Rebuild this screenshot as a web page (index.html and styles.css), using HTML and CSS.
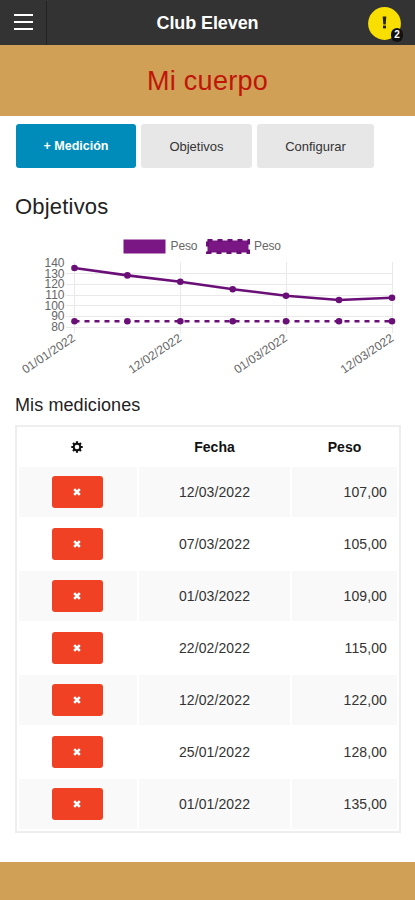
FILE: index.html
```html
<!DOCTYPE html>
<html lang="es">
<head>
    <meta charset="UTF-8">
    <meta name="viewport" content="width=device-width, initial-scale=1.0">
    <title>Club Eleven</title>
    <link rel="stylesheet" href="styles.css">
</head>
<body>
    <header class="topbar">
        <div class="menu">
            <div class="bars"><span></span><span></span><span></span></div>
        </div>
        <h1>Club Eleven</h1>
        <div class="alert">
            <svg width="34" height="34" viewBox="0 0 34 34">
                <circle cx="16.5" cy="16.5" r="16.4" fill="#f9df00"/>
                <path d="M14.7 9.4h3.6l-.6 8h-2.4z" fill="#222"/>
                <rect x="15" y="18.6" width="3" height="2.8" fill="#222"/>
            </svg>
            <span class="badge">2</span>
        </div>
    </header>

    <div class="page-title">Mi cuerpo</div>

    <main>
        <div class="buttons">
            <button class="btn primary">+ Medición</button>
            <button class="btn goals">Objetivos</button>
            <button class="btn config">Configurar</button>
        </div>

        <h2>Objetivos</h2>

        <svg class="chart" width="415" height="150" viewBox="0 230 415 150">
            <!-- Legend -->
            <rect x="123.5" y="239.5" width="42" height="14" fill="#7a1784"/>
            <text x="170.5" y="250" textLength="27">Peso</text>
            <rect x="207.5" y="240.5" width="41" height="12" fill="#7a1784" stroke="#6a0f77" stroke-width="3" stroke-dasharray="5 5"/>
            <text x="254" y="250" textLength="27">Peso</text>

            <!-- Grid -->
            <g stroke="#e9e9e9">
                <path d="M66 273.5H392M66 284.5H392M66 295.5H392M66 305.5H392M66 316.5H392M66 327.5H392"/>
                <path d="M74.5 262V333M180.5 262V333M286.5 262V333M392.5 262V333"/>
            </g>

            <g text-anchor="end">
                <text x="64.5" y="267">140</text>
                <text x="64.5" y="277.6">130</text>
                <text x="64.5" y="288.3">120</text>
                <text x="64.5" y="299">110</text>
                <text x="64.5" y="309.6">100</text>
                <text x="64.5" y="320.3">90</text>
                <text x="64.5" y="331">80</text>
                <text transform="translate(76 340) rotate(-34)" textLength="61">01/01/2022</text>
                <text transform="translate(182.5 340) rotate(-34)" textLength="61">12/02/2022</text>
                <text transform="translate(288 340) rotate(-34)" textLength="61">01/03/2022</text>
                <text transform="translate(394.5 340) rotate(-34)" textLength="61">12/03/2022</text>
            </g>

            <!-- Target weight -->
            <path d="M74.5 321.3H392" class="line" stroke-dasharray="5 5"/>
            <!-- Measured weight -->
            <path d="M74.5 268L127.4 275.4L180.3 281.8L233 289.2L286 295.7L339 300L392 297.8" class="line"/>
            <g fill="#6a0f77">
                <circle cx="74.5" cy="268" r="3.3"/>
                <circle cx="127.4" cy="275.4" r="3.3"/>
                <circle cx="180.3" cy="281.8" r="3.3"/>
                <circle cx="232.7" cy="289.2" r="3.3"/>
                <circle cx="286" cy="295.7" r="3.3"/>
                <circle cx="339" cy="300" r="3.3"/>
                <circle cx="392" cy="297.8" r="3.3"/>
                <circle cx="74.5" cy="321.3" r="3.3"/>
                <circle cx="127.4" cy="321.3" r="3.3"/>
                <circle cx="180.3" cy="321.3" r="3.3"/>
                <circle cx="232.7" cy="321.3" r="3.3"/>
                <circle cx="286" cy="321.3" r="3.3"/>
                <circle cx="339" cy="321.3" r="3.3"/>
                <circle cx="392" cy="321.3" r="3.3"/>
            </g>
        </svg>

        <h3>Mis mediciones</h3>

        <svg width="0" height="0" class="defs">
            <symbol id="cross" viewBox="0 0 8 8">
                <path d="M1.2 1.2L6.8 6.8M6.8 1.2L1.2 6.8" stroke="#fff" stroke-width="2.6"/>
            </symbol>
        </svg>

        <table>
            <colgroup><col class="c-del"><col class="c-date"><col class="c-weight"></colgroup>
            <tr>
                <th>
                    <svg class="gear" width="12" height="12" viewBox="0 0 12 12">
                        <circle cx="6" cy="6" r="3.3" fill="none" stroke="#111" stroke-width="2"/>
                        <path d="M6 0.3V2.4M6 9.6V11.7M0.3 6H2.4M9.6 6H11.7M2 2L3.4 3.4M8.6 8.6L10 10M10 2L8.6 3.4M3.4 8.6L2 10" stroke="#111" stroke-width="2.2"/>
                    </svg>
                </th>
                <th>Fecha</th>
                <th>Peso</th>
            </tr>
            <tr><td><button class="del"><svg width="8" height="8"><use href="#cross"/></svg></button></td><td>12/03/2022</td><td class="num">107,00</td></tr>
            <tr><td><button class="del"><svg width="8" height="8"><use href="#cross"/></svg></button></td><td>07/03/2022</td><td class="num">105,00</td></tr>
            <tr><td><button class="del"><svg width="8" height="8"><use href="#cross"/></svg></button></td><td>01/03/2022</td><td class="num">109,00</td></tr>
            <tr><td><button class="del"><svg width="8" height="8"><use href="#cross"/></svg></button></td><td>22/02/2022</td><td class="num">115,00</td></tr>
            <tr><td><button class="del"><svg width="8" height="8"><use href="#cross"/></svg></button></td><td>12/02/2022</td><td class="num">122,00</td></tr>
            <tr><td><button class="del"><svg width="8" height="8"><use href="#cross"/></svg></button></td><td>25/01/2022</td><td class="num">128,00</td></tr>
            <tr><td><button class="del"><svg width="8" height="8"><use href="#cross"/></svg></button></td><td>01/01/2022</td><td class="num">135,00</td></tr>
        </table>
    </main>

    <footer></footer>
</body>
</html>
```
FILE: styles.css
```css
* {
    box-sizing: border-box;
}
body {
    margin: 0;
    height: 900px;
    display: flex;
    flex-direction: column;
    font-family: "Liberation Sans", Arial, sans-serif;
    background: #fff;
    color: #222;
    overflow: hidden;
}
h1, h2, h3 {
    margin: 0;
}
.topbar {
    height: 45px;
    flex: none;
    display: grid;
    grid-template-columns: 47px 1fr 47px;
    align-items: center;
    background: #333;
    color: #fff;
}
.menu {
    height: 45px;
    display: flex;
    align-items: center;
    padding: 0 0 2px 14px;
    border-right: 1px solid #222;
}
.bars {
    display: flex;
    flex-direction: column;
    gap: 5px;
    width: 19px;
}
.bars span {
    height: 2px;
    background: #fff;
}
.topbar h1 {
    text-align: center;
    font-size: 18px;
    letter-spacing: -0.1px;
    line-height: 45px;
    padding-top: 1px;
}
.alert {
    position: relative;
    width: 34px;
    height: 34px;
    margin-top: 2px;
}
.alert svg {
    display: block;
}
.badge {
    position: absolute;
    right: -1px;
    bottom: -1px;
    width: 12px;
    height: 14px;
    border-radius: 6px;
    background: #111;
    font-size: 10px;
    font-weight: bold;
    line-height: 14px;
    text-align: center;
}
.page-title {
    height: 71px;
    flex: none;
    background: #cfa056;
    color: #c01508;
    font-size: 27px;
    letter-spacing: 0.3px;
    line-height: 72px;
    text-align: center;
}
main {
    height: 746px;
    flex: none;
    padding: 8px 14px 0 15px;
}
.buttons {
    display: flex;
    gap: 5px;
    padding-left: 1px;
}
button {
    border: 0;
    padding: 0;
    font-family: inherit;
    border-radius: 3px;
}
.btn {
    height: 44px;
    font-size: 13px;
    background: #e7e7e7;
    color: #333;
}
.btn.primary {
    width: 120px;
    background: #008cba;
    color: #fff;
    font-weight: bold;
    font-size: 12.5px;
}
.goals {
    width: 111px;
}
.config {
    width: 117px;
}
h2 {
    font-size: 22px;
    font-weight: normal;
    letter-spacing: 0.2px;
    line-height: 30px;
    margin-top: 24px;
}
.chart {
    display: block;
    margin: 8px 0 0 -15px;
    font-size: 12px;
}
.chart text {
    fill: #666;
}
.line {
    fill: none;
    stroke: #6a0f77;
    stroke-width: 2.6;
}
h3 {
    font-size: 18px;
    font-weight: normal;
    letter-spacing: 0.1px;
    line-height: 24px;
    margin-top: 13px;
}
.defs {
    position: absolute;
}
table {
    width: 386px;
    height: 408px;
    margin-top: 8px;
    table-layout: fixed;
    border: 2px solid #eee;
    border-spacing: 2px;
    font-size: 14px;
    text-align: center;
}
.c-del {
    width: 118px;
}
.c-date {
    width: 151px;
}
th, td {
    padding: 0;
}
th {
    height: 36px;
    color: #111;
}
td {
    height: 50px;
    color: #333;
    letter-spacing: 0.1px;
}
td:first-child, th:first-child {
    padding-right: 2px;
}
tr:nth-child(even) td {
    background: #f9f9f9;
}
td.num {
    text-align: right;
    padding-right: 10px;
}
.gear {
    display: block;
    margin: 0 auto;
}
.del {
    width: 51px;
    height: 32px;
    display: flex;
    align-items: center;
    justify-content: center;
    margin: 0 auto;
    background: #f04124;
}
footer {
    flex: 1;
    background: #cfa056;
}
```
